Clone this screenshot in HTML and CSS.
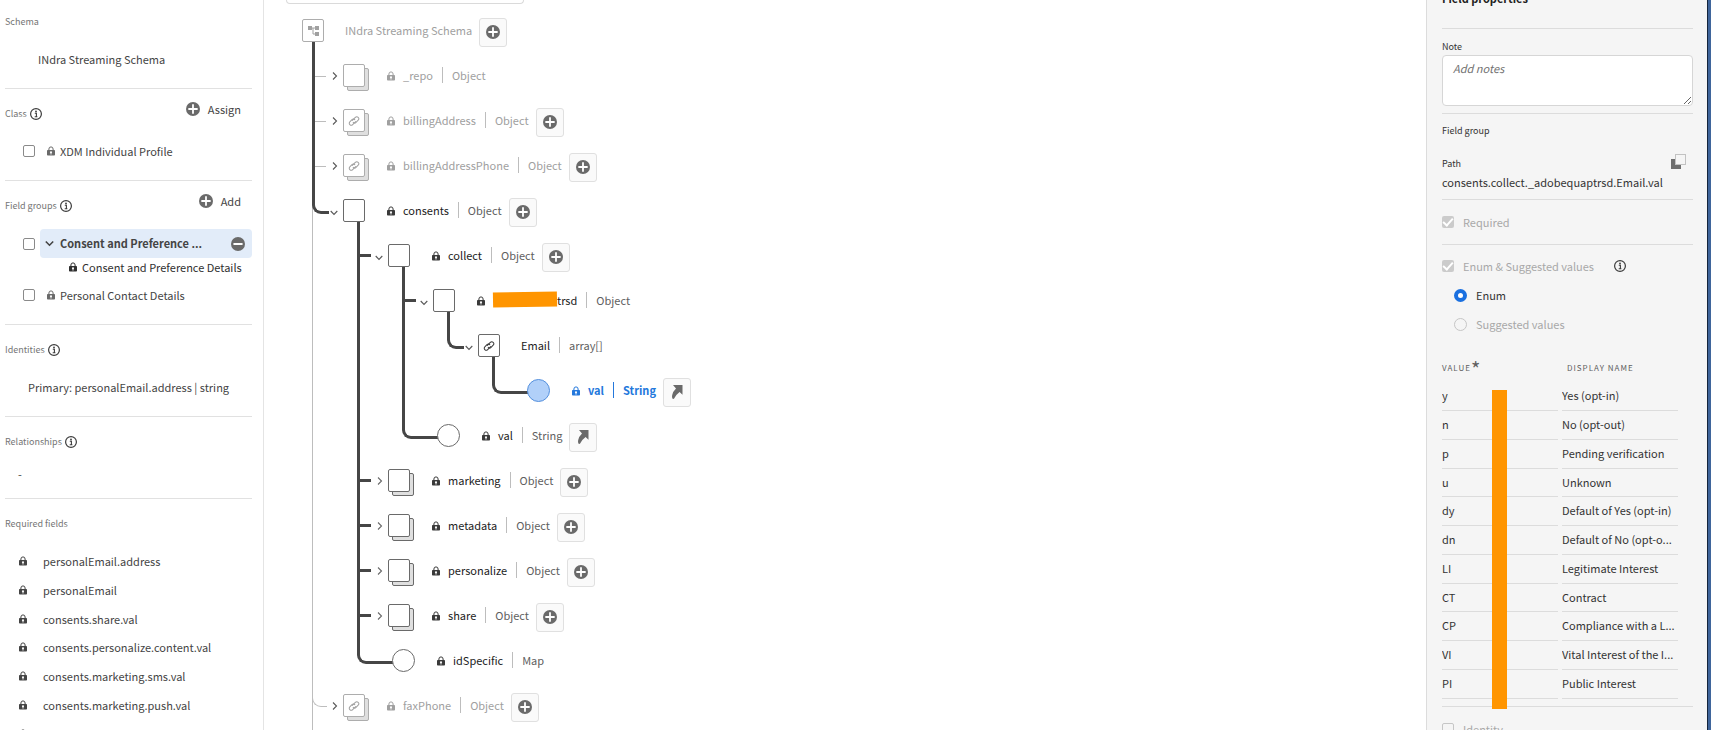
FILE: index.html
```html
<!DOCTYPE html>
<html lang="en">
<head>
<meta charset="utf-8">
<title>Schema editor</title>
<link rel="stylesheet" href="styles.css">
</head>
<body>
<svg class="defs" aria-hidden="true">
  <symbol id="lock" viewBox="0 0 8 10"><path d="M1.900 4.500V3a2.100 2.100 0 0 1 4.200 0v1.500" fill="none" stroke="currentColor" stroke-width="1"/><path fill="currentColor" fill-rule="evenodd" d="M.8 4h6.400q.8 0 .8.800v4q0 .8-.8.800H.8Q0 9.600 0 8.800V4.800Q0 4 .8 4zM4 5.200a1 1 0 0 0-.5 1.900v1.500h1V7.100A1 1 0 0 0 4 5.200z"/></symbol>
  <symbol id="plus" viewBox="0 0 14 14"><circle cx="7" cy="7" r="7" fill="currentColor"/><path d="M7 3v8M3 7h8" stroke="#fff" stroke-width="1.800" stroke-linecap="round"/></symbol>
  <symbol id="minus" viewBox="0 0 14 14"><circle cx="7" cy="7" r="7" fill="currentColor"/><path d="M3.200 7h7.600" stroke="#fff" stroke-width="2" stroke-linecap="round"/></symbol>
  <symbol id="info" viewBox="0 0 12 12"><circle cx="6" cy="6" r="5.400" fill="none" stroke="currentColor" stroke-width="1.200"/><circle cx="6" cy="3.500" r=".9" fill="currentColor"/><path d="M4.800 5.300H6.400V8.500M4.700 8.700h2.700" fill="none" stroke="currentColor" stroke-width="1.100"/></symbol>
  <symbol id="right" viewBox="0 0 6 10"><path d="M1 1.500L4.500 5 1 8.500" fill="none" stroke="currentColor" stroke-width="1.100"/></symbol>
  <symbol id="down" viewBox="0 0 8 6"><path d="M.7 1L4 4.500 7.300 1" fill="none" stroke="currentColor" stroke-width="1.100"/></symbol>
  <symbol id="caret" viewBox="0 0 9 7"><path d="M.8 1.500L4.500 5.200 8.200 1.500" fill="none" stroke="currentColor" stroke-width="1.600"/></symbol>
  <symbol id="link" viewBox="0 0 12 12"><g transform="rotate(-45 6 6)" fill="none" stroke="currentColor" stroke-width="1" stroke-linecap="round"><path d="M6.800 7.600H2.500a2 2 0 0 1-2-2 2 2 0 0 1 2-2H5.500a2 2 0 0 1 2 2"/><path d="M5.200 4.400H9.500a2 2 0 0 1 2 2 2 2 0 0 1-2 2H6.500a2 2 0 0 1-2-2"/></g></symbol>
  <symbol id="arrow" viewBox="0 0 14 14"><path fill="currentColor" d="M3 0h9.500V9.700L9.600 7Q6 9.500 3.800 14L2.300 13.400Q1.800 11.500 2.200 10 3 6.500 6 3.600z"/></symbol>
  <symbol id="nodes" viewBox="0 0 11 10"><path fill="currentColor" d="M0 0h4v4H0zM7 0h4v4H7zM7 6h4v4H7z"/><path d="M3 2h4M5 2v6h3" fill="none" stroke="currentColor"/></symbol>
  <symbol id="copy" viewBox="0 0 15 15"><path fill="#6e6e6e" d="M0 5h4v6h6v4H0z"/><path d="M4.500.5h10v10h-10z" fill="none" stroke="#8e8e8e" stroke-dasharray="1 1"/></symbol>
</svg>
<div class="app">
  <aside class="sidebar">
    <section class="block">
      <h2>Schema</h2>
      <p class="schema-name">INdra Streaming Schema</p>
    </section>
    <section class="block">
      <div class="head"><h2>Class</h2><svg class="info"><use href="#info"/></svg><button class="act"><svg class="i14"><use href="#plus"/></svg>Assign</button></div>
      <label class="pick"><input type="checkbox"><svg class="lock"><use href="#lock"/></svg>XDM Individual Profile</label>
    </section>
    <section class="block">
      <div class="head"><h2>Field groups</h2><svg class="info"><use href="#info"/></svg><button class="act"><svg class="i14"><use href="#plus"/></svg>Add</button></div>
      <div class="group"><input type="checkbox" aria-label="Consent and Preference Details"><div class="chosen"><svg class="caret"><use href="#caret"/></svg><span>Consent and Preference ...</span><button aria-label="Remove"><svg class="i14"><use href="#minus"/></svg></button></div></div>
      <p class="sub"><svg class="lock"><use href="#lock"/></svg>Consent and Preference Details</p>
      <label class="pick"><input type="checkbox"><svg class="lock"><use href="#lock"/></svg>Personal Contact Details</label>
    </section>
    <section class="block">
      <div class="head"><h2>Identities</h2><svg class="info"><use href="#info"/></svg></div>
      <p class="identity">Primary: personalEmail.address | string</p>
    </section>
    <section class="block short">
      <div class="head"><h2>Relationships</h2><svg class="info"><use href="#info"/></svg></div>
      <p class="none">-</p>
    </section>
    <section class="block">
      <h2>Required fields</h2>
      <ul class="required">
        <li><svg class="lock"><use href="#lock"/></svg>personalEmail.address</li>
        <li><svg class="lock"><use href="#lock"/></svg>personalEmail</li>
        <li><svg class="lock"><use href="#lock"/></svg>consents.share.val</li>
        <li><svg class="lock"><use href="#lock"/></svg>consents.personalize.content.val</li>
        <li><svg class="lock"><use href="#lock"/></svg>consents.marketing.sms.val</li>
        <li><svg class="lock"><use href="#lock"/></svg>consents.marketing.push.val</li>
        <li><svg class="lock"><use href="#lock"/></svg>consents.marketing.commercial.val</li>
      </ul>
    </section>
  </aside>

  <main class="canvas">
    <div class="search"></div>
    <div class="row root dim"><span class="box"><svg class="nodes"><use href="#nodes"/></svg></span><span class="label">INdra Streaming Schema</span><button class="add" aria-label="Add field"><svg class="i14"><use href="#plus"/></svg></button></div>
    <ul class="tree top">
      <li class="pass">
        <div class="row dim"><svg class="right"><use href="#right"/></svg><span class="box stack"></span><svg class="lock"><use href="#lock"/></svg><span class="label">_repo</span><span class="type">Object</span></div>
      </li>
      <li class="pass">
        <div class="row dim"><svg class="right"><use href="#right"/></svg><span class="box stack"><svg class="link"><use href="#link"/></svg></span><svg class="lock"><use href="#lock"/></svg><span class="label">billingAddress</span><span class="type">Object</span><button class="add" aria-label="Add field"><svg class="i14"><use href="#plus"/></svg></button></div>
      </li>
      <li class="pass">
        <div class="row dim"><svg class="right"><use href="#right"/></svg><span class="box stack"><svg class="link"><use href="#link"/></svg></span><svg class="lock"><use href="#lock"/></svg><span class="label">billingAddressPhone</span><span class="type">Object</span><button class="add" aria-label="Add field"><svg class="i14"><use href="#plus"/></svg></button></div>
      </li>
      <li class="turn">
        <div class="row"><svg class="down"><use href="#down"/></svg><span class="box"></span><svg class="lock"><use href="#lock"/></svg><span class="label">consents</span><span class="type">Object</span><button class="add" aria-label="Add field"><svg class="i14"><use href="#plus"/></svg></button></div>
        <ul class="tree">
          <li class="pass">
            <div class="row"><svg class="down"><use href="#down"/></svg><span class="box"></span><svg class="lock"><use href="#lock"/></svg><span class="label">collect</span><span class="type">Object</span><button class="add" aria-label="Add field"><svg class="i14"><use href="#plus"/></svg></button></div>
            <ul class="tree">
              <li class="pass">
                <div class="row"><svg class="down"><use href="#down"/></svg><span class="box"></span><svg class="lock"><use href="#lock"/></svg><span class="label masked"><span class="mask"></span>trsd</span><span class="type">Object</span></div>
                <ul class="tree">
                  <li class="turn">
                    <div class="row"><svg class="down"><use href="#down"/></svg><span class="box"><svg class="link"><use href="#link"/></svg></span><span class="label nolock">Email</span><span class="type">array[]</span></div>
                    <ul class="tree">
                      <li class="turn leaf">
                        <div class="row picked"><span class="dot"></span><svg class="lock"><use href="#lock"/></svg><span class="label">val</span><span class="type">String</span><button class="add" aria-label="Open field"><svg class="i14"><use href="#arrow"/></svg></button></div>
                      </li>
                    </ul>
                  </li>
                </ul>
              </li>
              <li class="turn leaf">
                <div class="row"><span class="dot"></span><svg class="lock"><use href="#lock"/></svg><span class="label">val</span><span class="type">String</span><button class="add" aria-label="Open field"><svg class="i14"><use href="#arrow"/></svg></button></div>
              </li>
            </ul>
          </li>
          <li class="pass">
            <div class="row"><svg class="right"><use href="#right"/></svg><span class="box stack"></span><svg class="lock"><use href="#lock"/></svg><span class="label">marketing</span><span class="type">Object</span><button class="add" aria-label="Add field"><svg class="i14"><use href="#plus"/></svg></button></div>
          </li>
          <li class="pass">
            <div class="row"><svg class="right"><use href="#right"/></svg><span class="box stack"></span><svg class="lock"><use href="#lock"/></svg><span class="label">metadata</span><span class="type">Object</span><button class="add" aria-label="Add field"><svg class="i14"><use href="#plus"/></svg></button></div>
          </li>
          <li class="pass">
            <div class="row"><svg class="right"><use href="#right"/></svg><span class="box stack"></span><svg class="lock"><use href="#lock"/></svg><span class="label">personalize</span><span class="type">Object</span><button class="add" aria-label="Add field"><svg class="i14"><use href="#plus"/></svg></button></div>
          </li>
          <li class="pass">
            <div class="row"><svg class="right"><use href="#right"/></svg><span class="box stack"></span><svg class="lock"><use href="#lock"/></svg><span class="label">share</span><span class="type">Object</span><button class="add" aria-label="Add field"><svg class="i14"><use href="#plus"/></svg></button></div>
          </li>
          <li class="turn leaf">
            <div class="row"><span class="dot"></span><svg class="lock"><use href="#lock"/></svg><span class="label">idSpecific</span><span class="type">Map</span></div>
          </li>
        </ul>
      </li>
      <li class="thin">
        <div class="row dim"><svg class="right"><use href="#right"/></svg><span class="box stack"><svg class="link"><use href="#link"/></svg></span><svg class="lock"><use href="#lock"/></svg><span class="label">faxPhone</span><span class="type">Object</span><button class="add" aria-label="Add field"><svg class="i14"><use href="#plus"/></svg></button></div>
      </li>
    </ul>
  </main>

  <aside class="props">
    <h1>Field properties</h1>
    <div class="part note">
      <label for="note">Note</label>
      <textarea id="note" placeholder="Add notes"></textarea>
    </div>
    <div class="part path">
      <h3>Field group</h3>
      <div class="path-head"><h3>Path</h3><button aria-label="Copy path"><svg class="copy"><use href="#copy"/></svg></button></div>
      <p>consents.collect._adobequaptrsd.Email.val</p>
    </div>
    <div class="part req">
      <label class="opt off"><input type="checkbox" checked disabled>Required</label>
    </div>
    <div class="part enum">
      <div class="enum-head"><label class="opt off"><input type="checkbox" checked disabled>Enum &amp; Suggested values</label><svg class="info"><use href="#info"/></svg></div>
      <label class="opt radio"><input type="radio" name="kind" checked>Enum</label>
      <label class="opt radio off"><input type="radio" name="kind" disabled>Suggested values</label>
      <div class="values">
        <table>
          <thead><tr><th>Value<span class="star">*</span></th><th class="name">Display name</th></tr></thead>
          <tbody>
            <tr><td>y</td><td>Yes (opt-in)</td></tr>
            <tr><td>n</td><td>No (opt-out)</td></tr>
            <tr><td>p</td><td>Pending verification</td></tr>
            <tr><td>u</td><td>Unknown</td></tr>
            <tr><td>dy</td><td>Default of Yes (opt-in)</td></tr>
            <tr><td>dn</td><td>Default of No (opt-o...</td></tr>
            <tr><td>LI</td><td>Legitimate Interest</td></tr>
            <tr><td>CT</td><td>Contract</td></tr>
            <tr><td>CP</td><td>Compliance with a L...</td></tr>
            <tr><td>VI</td><td>Vital Interest of the I...</td></tr>
            <tr><td>PI</td><td>Public Interest</td></tr>
          </tbody>
        </table>
        <span class="strip"></span>
      </div>
    </div>
    <div class="part ident">
      <label class="opt off"><input type="checkbox" disabled>Identity</label>
    </div>
  </aside>
</div>
</body>
</html>
```
FILE: styles.css
```css
* { box-sizing: border-box; }
body {
  margin: 0;
  font: 11px/16px "Noto Sans CJK SC", "Open Sans", sans-serif;
  color: #444;
  background: #fff;
}
h1, h2, h3, p, ul { margin: 0; padding: 0; }
ul { list-style: none; }
svg { flex: none; display: block; }
button { border: 0; padding: 0; background: none; font: inherit; color: inherit; }
input { appearance: none; margin: 0; flex: none; }
.defs { position: absolute; width: 0; height: 0; }
.lock { width: 8px; height: 10px; }
.i14 { width: 14px; height: 14px; color: #6a6a6a; }
.info { width: 12px; height: 12px; color: #3c3c3c; }

.app {
  display: grid;
  grid-template-columns: 264px minmax(0, 1fr) 285px;
  height: 100vh;
  overflow: hidden;
}

/* left rail */
.sidebar { border-right: 1px solid #e4e4e4; padding: 0 11px 0 5px; overflow: hidden; }
.block { height: 92px; border-bottom: 1px solid #e1e1e1; padding-top: 17px; }
.block:first-child { height: 89px; padding-top: 14px; }
.block:nth-child(3) { height: 144px; }
.block.short { height: 82px; }
.block:last-child { height: auto; border: 0; }
.block h2 { font-size: 9px; font-weight: 400; line-height: 16px; color: #757575; }
.schema-name { padding: 21px 0 0 33px; }
.head { display: flex; align-items: center; gap: 3px; height: 16px; }
.act { margin: -10px 11px 0 auto; display: flex; align-items: center; gap: 8px; }
.pick { display: flex; align-items: center; gap: 5px; padding-left: 18px; margin-top: 21px; }
.pick .lock { margin-left: 7px; color: #6a6a6a; }
.sidebar input { width: 12px; height: 12px; border: 1px solid #8a8a8a; border-radius: 2px; }
.group { display: flex; align-items: center; gap: 5px; padding-left: 18px; margin-top: 15px; }
.chosen { flex: 1; min-width: 0; display: flex; align-items: center; height: 29px; padding: 0 7px 0 5px; background: #e2ecf9; border-radius: 4px; font-weight: 700; }
.chosen span { padding-bottom: 2px; white-space: nowrap; margin-left: 6px; }
.chosen button { margin-left: auto; }
.caret { width: 9px; height: 7px; }
.sub { display: flex; align-items: center; gap: 5px; padding-left: 64px; margin-top: 1px; color: #2f2f2f; white-space: nowrap; }
.sub + .pick { margin-top: 12px; }
.identity { padding: 21px 0 0 23px; }
.none { padding: 16px 0 0 13px; }
.required { padding-top: 14px; }
.required li { display: flex; align-items: center; gap: 16px; height: 29px; padding-left: 14px; }
.required li:nth-child(4n) { height: 28px; }

/* schema tree */
.canvas { padding-left: 38px; overflow: hidden; }
.search { width: 238px; height: 4px; margin: 0 0 4px -16px; border: 1px solid #dadada; border-top: 0; border-radius: 0 0 4px 4px; }
.row { isolation: isolate; display: flex; align-items: center; height: 45px; padding-left: 15px; color: #3a3a3a; white-space: nowrap; }
.root { padding-left: 0; }
.tree { margin-left: 45px; }
.top { position: relative; margin-left: 10px; }
.top::before { content: ""; position: absolute; left: 0; top: 0; bottom: -45px; border-left: 1px solid #bdbdbd; }
.tree li { position: relative; }
.tree li::before { content: ""; position: absolute; left: 0; top: -11px; }
.pass::before { bottom: 0; border-left: 3px solid #464646; }
.turn::before, .thin::before { width: 14px; height: 34px; border: solid #464646; border-width: 0 0 3px 3px; border-bottom-left-radius: 9px; }
.leaf::before { width: 36px; }
.thin::before { border-color: #bdbdbd; border-width: 0 0 1px 1px; }
.pass::after { content: ""; position: absolute; left: 3px; top: 21px; width: 11px; height: 3px; background: #464646; }
.top > .pass::after { height: 1px; top: 23px; background: #bdbdbd; }
.right { width: 6px; height: 10px; margin: 0 5px; color: #6a6a6a; }
.down { width: 8px; height: 6px; margin: 4px 5px 0 3px; color: #5a5a5a; }
.box { position: relative; flex: none; width: 22px; height: 23px; border: 1px solid #6a6a6a; border-radius: 2px; background: #fff; display: flex; align-items: center; justify-content: center; }
.stack::after { content: ""; position: absolute; z-index: -1; inset: 3px -5px -5px 3px; border: 1px solid #6a6a6a; border-radius: 2px; background: #dfdfdf; }
.dim .box, .dim .stack::after { border-color: #adadad; }
.dot { position: relative; flex: none; width: 23px; height: 23px; margin-left: 20px; border: 1px solid #6a6a6a; border-radius: 50%; background: #fff; }
.link { width: 12px; height: 12px; }
.nodes { width: 11px; height: 10px; }
.row > .lock { margin: 0 8px 0 22px; }
.label { color: #222; padding-bottom: 2px; }
.root .label, .nolock { margin-left: 21px; }
.type { display: flex; align-items: center; gap: 9px; margin-left: 9px; padding-bottom: 2px; color: #606060; }
.type::before { content: ""; width: 1px; height: 16px; background: #bdbdbd; }
.dim, .dim .label, .dim .type { color: #a0a0a0; }
.dim .right { color: #5a5a5a; }
.add { width: 28px; height: 29px; margin: 3px 0 0 7px; border: 1px solid #e0e0e0; border-radius: 3px; background: #fafafa; display: grid; place-items: center; }
.masked { display: flex; align-items: center; }
.mask { width: 64px; height: 15px; background: #ff9500; transform: rotate(-1deg); }
.picked, .picked .label, .picked .type { color: #2478dc; font-weight: 700; }
.picked .type::before { background: #2478dc; }
.picked .dot { background: #b1d0f9; border-color: #5590dd; }

/* right rail */
.props { padding: 0 15px; background: #f5f5f5; border-left: 1px solid #dcdcdc; border-right: 3px solid #3f659b; box-shadow: inset -1px 0 #14243c; overflow: hidden; color: #333; }
.props h1 { font-size: 11px; line-height: 18px; margin-top: -11px; color: #222; }
.part { border-top: 1px solid #dcdcdc; }
.note { margin-top: 21px; padding-top: 10px; height: 85px; }
.note label, .props h3 { display: block; font-size: 9px; line-height: 16px; font-weight: 400; }
textarea { display: block; width: 100%; height: 51px; padding: 4px 10px; border: 1px solid #d6d6d6; border-radius: 4px; background: #fff; font: inherit; resize: vertical; }
textarea::placeholder { font-style: italic; color: #707070; }
.path { padding-top: 9px; height: 86px; }
.path-head { display: flex; justify-content: space-between; align-items: center; margin-top: 17px; padding-right: 7px; }
.path-head button { margin-top: -5px; }
.copy { width: 15px; height: 15px; }
.path p { margin-top: 2px; }
.req { height: 45px; padding-top: 14px; }
.opt { display: flex; align-items: center; gap: 9px; }
.opt.off { color: #a8a8a8; }
.opt input { width: 12px; height: 12px; border: 1px solid #c6c6c6; border-radius: 2px; }
.opt input[type=checkbox]:checked { border: 0; background: #cbcbcb; display: grid; place-items: center; }
.opt input[type=checkbox]:checked::before { content: ""; width: 8px; height: 4px; margin-top: -2px; border: solid #fff; border-width: 0 0 2px 2px; transform: rotate(-48deg); }
.enum { height: 462px; padding-top: 13px; }
.enum-head { display: flex; align-items: center; gap: 20px; }
.radio { margin: 13px 0 0 12px; }
.radio input { width: 13px; height: 13px; border-radius: 50%; }
.radio input:checked { border: 4px solid #1a70e0; background: #fff; }
.values { position: relative; margin: 22px 11px 0 -4px; }
table { width: 100%; table-layout: fixed; border-collapse: separate; border-spacing: 4px 0; }
th { height: 28px; padding: 0; text-align: left; vertical-align: middle; font-size: 8px; line-height: 16px; font-weight: 400; text-transform: uppercase; letter-spacing: 1px; color: #606060; }
.name { padding-left: 5px; }
.star { font-size: 20px; line-height: 0; vertical-align: -6px; }
td { height: 29px; padding: 0 0 2px; border-bottom: 1px solid #dcdcdc; overflow: hidden; white-space: nowrap; }
tr:nth-child(4n) td { height: 28px; }
.strip { position: absolute; left: 54px; top: 36px; bottom: -10px; width: 15px; background: #ff9500; }
.ident { padding-top: 14px; }
```
